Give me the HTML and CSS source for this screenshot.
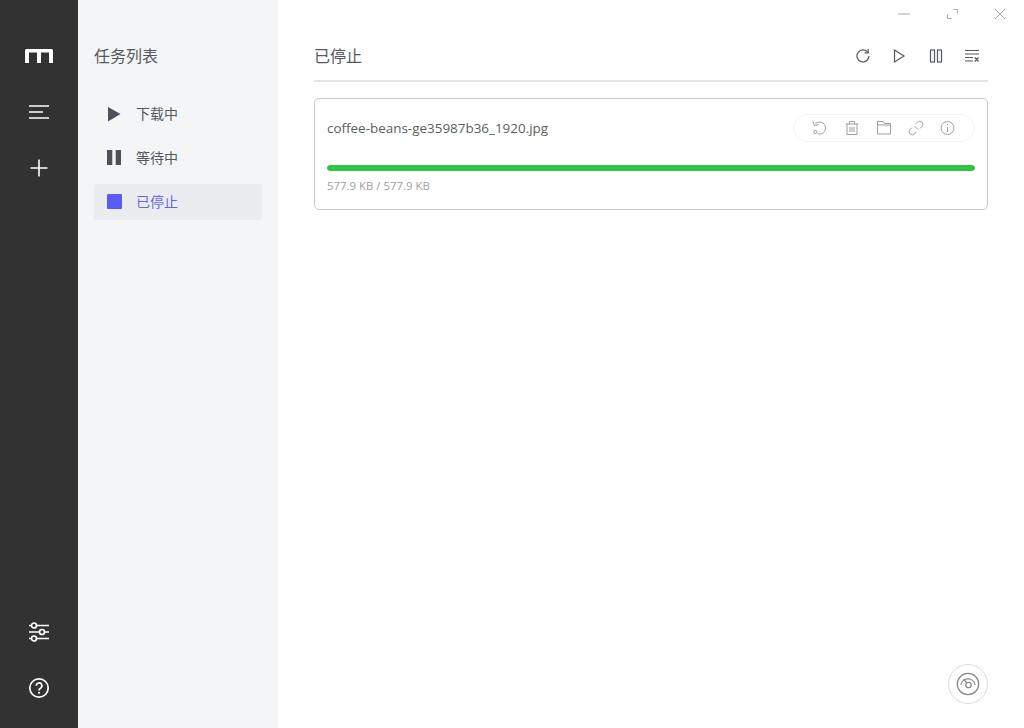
FILE: index.html
```html
<!DOCTYPE html>
<html lang="zh-CN">
<head>
<meta charset="utf-8">
<title>任务列表</title>
<link rel="stylesheet" href="styles.css">
</head>
<body>
<div class="app">
  <aside class="rail">
    <div class="rail-group">
      <div class="rail-item">
        <svg class="i28" viewBox="0 0 28 28"><path class="rail-logo" d="M0 21V8.500A1.500 1.500 0 0 1 1.500 7H26.500A1.500 1.500 0 0 1 28 8.500V21H24V10.500H16V21H12V10.500H4V21Z"/></svg>
      </div>
      <div class="rail-item">
        <svg class="i28" viewBox="0 0 28 28"><path class="rail-s" d="M4 8H24M4 14H18M4 20H24"/></svg>
      </div>
      <div class="rail-item">
        <svg class="i28" viewBox="0 0 28 28"><path class="rail-s" d="M14 5.500V22.500M5.500 14H22.500"/></svg>
      </div>
    </div>
    <div class="rail-group">
      <div class="rail-item">
        <svg class="i28" viewBox="0 0 28 28"><g class="rail-m"><path d="M4 7.500H6.500M11.500 7.500H24M4 14H14M19.500 14H24M4 20.500H6.500M11.500 20.500H24"/><circle cx="9" cy="7.500" r="2.500"/><circle cx="17" cy="14" r="2.500"/><circle cx="9" cy="20.500" r="2.500"/></g></svg>
      </div>
      <div class="rail-item">
        <svg class="i28" viewBox="0 0 28 28"><circle class="rail-m" cx="14" cy="14" r="9.200"/><path class="rail-m" d="M11.300 11.800A2.800 2.800 0 1 1 15.500 14.200C14.500 14.800 14 15.200 14 16.400"/><circle class="rail-dot" cx="14" cy="18.800" r="1.100"/></svg>
      </div>
    </div>
  </aside>

  <nav class="subnav">
    <h2 class="subnav-title">任务列表</h2>
    <ul class="subnav-list">
      <li class="subnav-item">
        <svg class="i20" viewBox="0 0 20 20"><path d="M4 3L16.500 10L4 17.500Z"/></svg>
        <span class="subnav-label">下载中</span>
      </li>
      <li class="subnav-item">
        <svg class="i20" viewBox="0 0 20 20"><path d="M3 2H8.300V17H3ZM11.700 2H17V17H11.700Z"/></svg>
        <span class="subnav-label">等待中</span>
      </li>
      <li class="subnav-item active">
        <svg class="i20" viewBox="0 0 20 20"><rect x="3" y="2" width="15" height="15" rx="1"/></svg>
        <span class="subnav-label">已停止</span>
      </li>
    </ul>
  </nav>

  <main class="main">
    <div class="win-controls">
      <svg class="win" viewBox="0 0 12 12"><path d="M0 6H12"/></svg>
      <svg class="win" viewBox="0 0 12 12"><path d="M7.500 1.500H11.500V5.500M1.500 6.500V10.500H5.500"/></svg>
      <svg class="win" viewBox="0 0 12 12"><path d="M1 1L11 11M11 1L1 11"/></svg>
    </div>
    <header class="head">
      <h1 class="head-title">已停止</h1>
      <div class="head-tools">
        <svg class="tool" viewBox="0 0 16 16"><path d="M11.900 4.500A6 6 0 1 0 13 8"/><path d="M12.200 1V4.800H8.500"/></svg>
        <svg class="tool" viewBox="0 0 16 16"><path d="M2.500 2L12 8L2.500 14Z"/></svg>
        <svg class="tool" viewBox="0 0 16 16"><rect x="2.500" y="2" width="4" height="12"/><rect x="9.500" y="2" width="4" height="12"/></svg>
        <svg class="tool" viewBox="0 0 16 16"><path d="M1 2.500H15M1 6H15M1 9.500H9M1 13H9M10.800 9.500L14.500 13.500M14.500 9.500L10.800 13.500"/></svg>
      </div>
    </header>
    <article class="task">
      <div class="task-top">
        <span class="task-name">coffee-beans-ge35987b36_1920.jpg</span>
        <div class="task-actions">
          <svg class="act" viewBox="0 0 16 16"><path d="M3.500 3.500C8 .5 13.500 3 13.500 8S8.500 15 5.500 13.500"/><path d="M.8 1.500L2.500 5.500L6.500 4.500"/><circle cx="3.200" cy="12" r="1.600"/></svg>
          <svg class="act" viewBox="0 0 16 16"><path d="M1.500 4H14.500M5.500 4V1.500H10.500V4M3 4V14.500H13V4M6 7V12M8 7V12M10 7V12"/></svg>
          <svg class="act" viewBox="0 0 16 16"><path d="M1.500 1.500H7L8.500 3.500H14.500V14H1.500ZM1.500 5H14.500"/></svg>
          <svg class="act" viewBox="0 0 16 16"><path d="M6.500 6L10 9.500M7.500 4L9.500 2.200A3 3 0 0 1 14 6.500L12 8.500M8.500 12L6.500 13.800A3 3 0 0 1 2 9.500L4 7.500"/></svg>
          <svg class="act" viewBox="0 0 16 16"><circle cx="7.500" cy="8" r="6.500"/><path d="M7.500 7V12M7.500 4V5.500"/></svg>
        </div>
      </div>
      <div class="bar"><div class="bar-fill"></div></div>
      <div class="task-size">577.9 KB / 577.9 KB</div>
    </article>
    <div class="speed">
      <svg class="speed-icon" viewBox="0 0 24 24"><circle cx="12" cy="12" r="10.700"/><path d="M4.800 13A7.300 7.300 0 0 1 19.200 13M7.500 7L11 11"/><circle cx="12.500" cy="13" r="2.700"/></svg>
    </div>
  </main>
</div>
</body>
</html>
```

FILE: styles.css
```css
* { box-sizing: border-box; }
html, body { margin: 0; padding: 0; height: 100%; }
body {
  font-family: "Open Sans", "Noto Sans CJK SC", sans-serif;
  color: #555861;
  background: #fff;
  overflow: hidden;
}
.app { display: flex; width: 1024px; height: 728px; }

.rail {
  width: 78px;
  flex: none;
  background: #323232;
  display: flex;
  flex-direction: column;
  justify-content: space-between;
  padding: 28px 0 12px;
}
.rail-group { display: flex; flex-direction: column; }
.rail-item { height: 56px; display: flex; align-items: center; justify-content: center; }
.i28 { width: 28px; height: 28px; display: block; }
.rail-logo { fill: #fff; }
.rail-s { fill: none; stroke: #fff; stroke-width: 1.600; }
.rail-m { fill: none; stroke: #fff; stroke-width: 1.700; }
.rail-dot { fill: #fff; }

.subnav {
  width: 200px;
  flex: none;
  background: #f4f5f7;
  padding: 0 16px;
}
.subnav-title {
  margin: 0;
  height: 96px;
  padding-top: 45px;
  font-size: 16px;
  line-height: 22px;
  font-weight: 400;
  color: #555861;
}
.subnav-list { list-style: none; margin: 0; padding: 0; display: flex; flex-direction: column; gap: 8px; }
.subnav-item {
  height: 36px;
  display: flex;
  align-items: center;
  gap: 12px;
  padding-left: 10px;
  font-size: 14px;
  border-radius: 3px;
  color: #555861;
}
.subnav-label { padding-bottom: 2px; }
.i20 { width: 20px; height: 20px; display: block; fill: #4d515a; }
.subnav-item.active { background: #ebecf0; color: #6464ee; }
.active .i20 { fill: #5b5bfa; }

.main {
  flex: 1;
  min-width: 0;
  position: relative;
  padding: 0 36px;
}
.win-controls { position: absolute; top: 8px; right: 18px; display: flex; gap: 36px; }
.win { width: 12px; height: 12px; display: block; fill: none; stroke: #a8a8a8; stroke-width: 1; }
.head {
  height: 82px;
  display: flex;
  align-items: flex-end;
  justify-content: space-between;
  border-bottom: 2px solid #e4e5e8;
  padding-bottom: 13px;
}
.head-title { margin: 0; font-size: 16px; line-height: 22px; font-weight: 400; color: #555861; }
.head-tools { display: flex; gap: 20px; padding-right: 8px; padding-bottom: 3px; }
.tool { width: 16px; height: 16px; display: block; fill: none; stroke: #55585f; stroke-width: 1.200; }

.task {
  margin-top: 16px;
  height: 112px;
  border: 1px solid #c9c9c9;
  border-radius: 5px;
  padding: 12px;
}
.task-top { display: flex; align-items: center; justify-content: space-between; height: 34px; }
.task-name { font-size: 13.440px; line-height: 18px; color: #5a5f5c; }
.task-actions {
  display: flex;
  gap: 16px;
  height: 28px;
  align-items: center;
  padding: 0 18px;
  border: 1px solid #f5f5f5;
  border-radius: 14px;
}
.act { width: 16px; height: 16px; display: block; fill: none; stroke: #9b9ea3; stroke-width: 1; }
.bar { margin-top: 20px; height: 6px; border-radius: 3px; background: #ebecf0; overflow: hidden; }
.bar-fill { width: 100%; height: 100%; background: #2ec544; border-radius: 3px; }
.task-size { margin-top: 7px; font-size: 11.400px; line-height: 16px; color: #a0a0a0; }

.speed {
  position: absolute;
  right: 36px;
  bottom: 24px;
  width: 40px;
  height: 40px;
  border: 1px solid #dcdcdc;
  border-radius: 50%;
  display: flex;
  align-items: center;
  justify-content: center;
}
.speed-icon { width: 24px; height: 24px; display: block; fill: none; stroke: #8a8a8a; stroke-width: 1.300; }
```
